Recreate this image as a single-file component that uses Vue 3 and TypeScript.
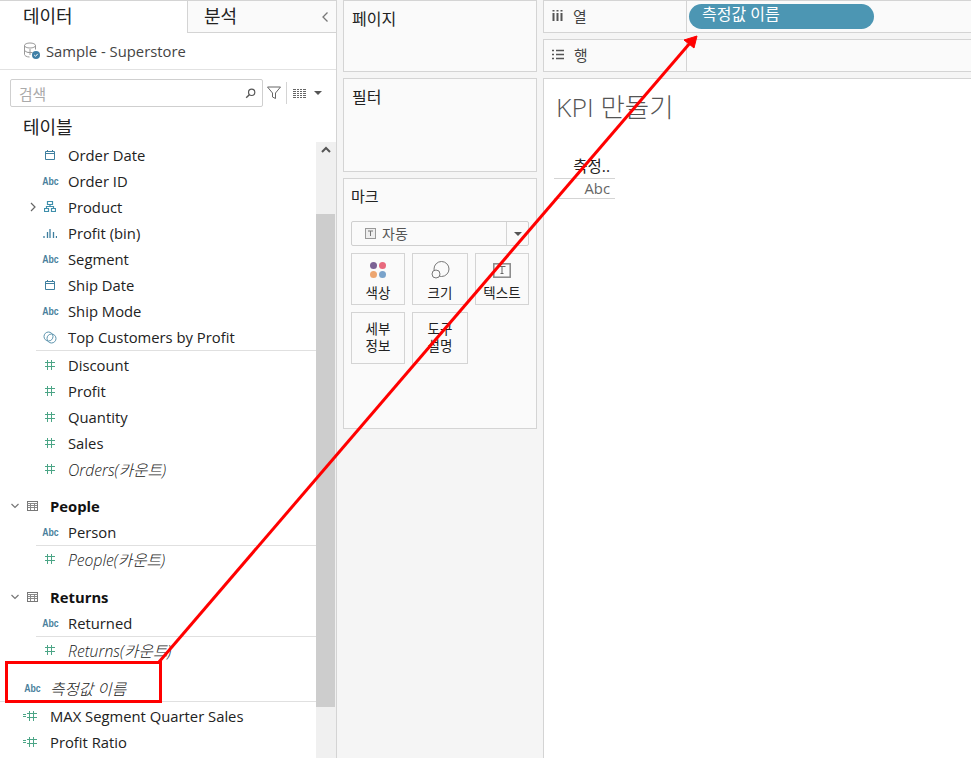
<template>
  <div class="app">
    <aside class="side">
      <div class="tabs">
        <div class="tab active">데이터</div>
        <div class="tab other">
          <span>분석</span>
          <svg class="collapse" width="8" height="12" viewBox="0 0 8 12"><path d="M6.500 1.500 2 6l4.500 4.500" fill="none" stroke="#777" stroke-width="1.300" /></svg>
        </div>
      </div>
      <div class="source">
        <svg width="18" height="18" viewBox="0 0 18 18">
          <ellipse cx="7" cy="3.500" rx="5.500" ry="2.500" fill="none" stroke="#999" />
          <path d="M1.500 3.500v9c0 1 2 2.500 5 2.500M12.500 3.500v4M1.500 8c0 1 2 2.500 5 2.500M7 7v6M4.500 10.500h5" fill="none" stroke="#999" />
          <circle cx="13" cy="13" r="4" fill="#3f7fa6" />
          <path d="m11.200 13 1.300 1.300 2.200-2.400" fill="none" stroke="#fff" />
        </svg>
        <span>Sample - Superstore</span>
      </div>
      <div class="searchrow">
        <div class="search">
          <span class="ph">검색</span>
          <svg width="11" height="11" viewBox="0 0 14 14"><circle cx="8.500" cy="5.500" r="4" fill="none" stroke="#555" stroke-width="1.500" /><path d="M5.500 8.500 1.500 12.500" stroke="#555" stroke-width="1.800" /></svg>
        </div>
        <svg class="funnel" width="14" height="14" viewBox="0 0 14 14"><path d="M.5 1h13L8.500 7v5.500l-3-1.500V7z" fill="none" stroke="#666" /></svg>
        <div class="vsep"></div>
        <svg class="gridicon" width="13" height="9" viewBox="0 0 13 9"><path d="M0 .5h13M0 2.500h13M0 4.500h13M0 6.500h13M0 8.500h13" stroke="#666" /><path d="M3.500 0v9M6.500 0v9M9.500 0v9" stroke="#fff" /></svg>
        <span class="tri"></span>
      </div>
      <div class="tablehead">테이블</div>
      <div class="listwrap">
        <div class="list">
          <template v-for="row in rows" :key="row.key">
            <div v-if="row.kind === 'sep'" class="sep" :class="{ wide: row.wide }"></div>
            <div v-else-if="row.kind === 'gap'" class="gap" :style="{ height: row.h + 'px' }"></div>
            <div v-else-if="row.kind === 'group'" class="row group">
              <svg class="chev" width="10" height="8" viewBox="0 0 10 8"><path d="m1.500 2 3.500 3.500L8.500 2" fill="none" stroke="#777" stroke-width="1.200" /></svg>
              <svg width="11" height="10" viewBox="0 0 11 10"><rect x=".5" y=".5" width="10" height="9" fill="#fff" stroke="#777" /><path d="M0 2.500h11M1 4.500h9M1 6.500h9M3.500 3v6M7.500 3v6" stroke="#888" /></svg>
              <span>{{ row.label }}</span>
            </div>
            <div v-else class="row" :class="{ top: row.top, it: row.italic }">
              <svg v-if="row.expand" class="expand" width="6" height="10" viewBox="0 0 6 10"><path d="m1 1 4 4-4 4" fill="none" stroke="#666" stroke-width="1.200" /></svg>
              <span class="ico">
                <span v-if="row.icon === 'abc'" class="abc">Abc</span>
                <svg v-else-if="row.icon === 'date'" width="12" height="12" viewBox="0 0 12 12"><path d="M1.500 2.500h9v8h-9zM1.500 4.500h9M3.500 1v2M8.500 1v2" fill="none" stroke="#3f7f9f" /></svg>
                <svg v-else-if="row.icon === 'tree'" width="12" height="12" viewBox="0 0 12 12"><path d="M3.500 .5h5v3h-5zM.5 7.500h4v3h-4zM7.500 7.500h4v3h-4zM6 3.500v2M2.500 7.500v-2h7v2" fill="none" stroke="#3f8fab" stroke-width="1.200" /></svg>
                <svg v-else-if="row.icon === 'bin'" width="14" height="10" viewBox="0 0 14 10"><path d="M1 8v2M4.500 4v6M7 1v9M10.500 4v6M13.500 8v2" stroke="#3f7f9f" stroke-width="1.300" /></svg>
                <svg v-else-if="row.icon === 'set'" width="14" height="13" viewBox="0 0 14 13"><circle cx="5.500" cy="5.500" r="4.500" fill="none" stroke="#5b93ad" /><circle cx="8.500" cy="7.500" r="4.500" fill="none" stroke="#5b93ad" /></svg>
                <svg v-else-if="row.icon === 'num'" width="10" height="10" viewBox="0 0 10 10"><path d="M2.500 0v10M6.500 0v10M0 2.500h10M0 6.500h10" stroke="#4ba586" /></svg>
                <svg v-else class="calc" width="14" height="10" viewBox="0 0 14 10"><path d="M6.500 0v10M10.500 0v10M4 2.500h10M4 6.500h10" stroke="#4ba586" /><path d="M0 3.500h3M0 5.500h3" stroke="#4ba586" /></svg>
              </span>
              <span>{{ row.label }}</span>
            </div>
          </template>
        </div>
        <div class="scroll">
          <svg class="up" width="12" height="8" viewBox="0 0 12 8"><path d="m2 6 4-4 4 4" fill="none" stroke="#555" stroke-width="2" /></svg>
          <div class="thumb"></div>
        </div>
      </div>
    </aside>

    <section class="mid">
      <div class="card pages">페이지</div>
      <div class="card filters">필터</div>
      <div class="card marks">
        <div class="markstitle">마크</div>
        <div class="dropdown">
          <svg width="11" height="11" viewBox="0 0 11 11"><rect x=".5" y=".5" width="10" height="10" fill="#eee" stroke="#999" /><path d="M3 3h5M5.500 3v5" stroke="#777" /></svg>
          <span class="dd-label">자동</span>
          <span class="dd-arrow"><span class="tri"></span></span>
        </div>
        <div class="markgrid">
          <div class="mark w54">
            <span class="mi"><svg width="18" height="18" viewBox="0 0 18 18"><circle cx="4.500" cy="4.500" r="3.500" fill="#7b6294" /><circle cx="13.500" cy="4.500" r="3.500" fill="#e8697d" /><circle cx="4.500" cy="13.500" r="3.500" fill="#eda671" /><circle cx="13.500" cy="13.500" r="3.500" fill="#7aa3cb" /></svg></span>
            <span>색상</span>
          </div>
          <div class="mark w56">
            <span class="mi"><svg width="19" height="18" viewBox="0 0 19 18"><circle cx="10.500" cy="8" r="7.500" fill="none" stroke="#777" /><circle cx="5" cy="13" r="4" fill="#fafafa" stroke="#777" /></svg></span>
            <span>크기</span>
          </div>
          <div class="mark w54">
            <span class="mi"><svg width="18" height="15" viewBox="0 0 18 15"><rect x=".8" y=".8" width="16.400" height="13.400" fill="none" stroke="#888" stroke-width="1.500" /><path d="M5.500 3.500h7M9 3.500v7M7.500 10.500h3" fill="none" stroke="#666" /></svg></span>
            <span>텍스트</span>
          </div>
          <div class="mark w54 two"><span>세부<br />정보</span></div>
          <div class="mark w56 two"><span>도구<br />설명</span></div>
        </div>
      </div>
    </section>

    <main class="main">
      <div class="shelf cols">
        <div class="shelflabel">
          <svg width="11" height="11" viewBox="0 0 11 11"><path d="M1.500 3v8M5.500 3v8M9.500 3v8M1.500 0v1.500M5.500 0v1.500M9.500 0v1.500" stroke="#555" stroke-width="2" /></svg>
          <span>열</span>
        </div>
        <div class="shelfbody"><div class="pill">측정값 이름</div></div>
      </div>
      <div class="shelf rowsh">
        <div class="shelflabel">
          <svg width="12" height="11" viewBox="0 0 12 11"><path d="M0 1.500h2M4 1.500h8M0 5.500h2M4 5.500h8M0 9.500h2M4 9.500h8" stroke="#555" stroke-width="1.600" /></svg>
          <span>행</span>
        </div>
        <div class="shelfbody"></div>
      </div>
      <div class="view">
        <h1>KPI 만들기</h1>
        <div class="vtable">
          <div class="vh">측정..</div>
          <div class="vc">Abc</div>
        </div>
      </div>
    </main>

    <div class="redbox"></div>
    <svg class="arrow" width="971" height="758" viewBox="0 0 971 758">
      <path d="M159 662 690 43" stroke="#f00" stroke-width="3" fill="none" />
      <path d="M697 36 684 40 694 48z" fill="#f00" stroke="#f00" />
    </svg>
  </div>
</template>

<script setup lang="ts">
interface Row {
  key: string
  kind: 'field' | 'sep' | 'gap' | 'group'
  label?: string
  icon?: string
  italic?: boolean
  top?: boolean
  expand?: boolean
  wide?: boolean
  h?: number
}

const field = (label: string, icon: string, extra: Partial<Row> = {}): Row => ({
  key: label,
  kind: 'field',
  label,
  icon,
  ...extra
})
const sep = (key: string, wide = false): Row => ({ key, kind: 'sep', wide })
const gap = (key: string, h: number): Row => ({ key, kind: 'gap', h })
const group = (label: string): Row => ({ key: label, kind: 'group', label })

const rows: Row[] = [
  field('Order Date', 'date'),
  field('Order ID', 'abc'),
  field('Product', 'tree', { expand: true }),
  field('Profit (bin)', 'bin'),
  field('Segment', 'abc'),
  field('Ship Date', 'date'),
  field('Ship Mode', 'abc'),
  field('Top Customers by Profit', 'set'),
  sep('s1'),
  gap('g0', 1),
  field('Discount', 'num'),
  field('Profit', 'num'),
  field('Quantity', 'num'),
  field('Sales', 'num'),
  field('Orders(카운트)', 'num', { italic: true }),
  gap('g1', 11),
  group('People'),
  field('Person', 'abc'),
  sep('s2'),
  field('People(카운트)', 'num', { italic: true }),
  gap('g2', 12),
  group('Returns'),
  field('Returned', 'abc'),
  sep('s3'),
  field('Returns(카운트)', 'num', { italic: true }),
  gap('g3', 12),
  field('측정값 이름', 'abc', { italic: true, top: true }),
  sep('s4', true),
  gap('g5', 1),
  field('MAX Segment Quarter Sales', 'calc', { top: true }),
  field('Profit Ratio', 'calc', { top: true })
]
</script>

<style>
html,
body {
  margin: 0;
  background: #f5f5f5;
}
</style>

<style scoped>
.app {
  position: relative;
  display: flex;
  width: 971px;
  height: 758px;
  overflow: hidden;
  font-family: "Open Sans", "Noto Sans CJK KR", sans-serif;
  font-size: 14.8px;
  color: #222;
  background: #f5f5f5;
}
.side {
  width: 336px;
  height: 758px;
  flex: none;
  background: #fff;
  border-right: 1px solid #d4d4d4;
  overflow: hidden;
}
.tabs {
  display: flex;
  height: 33px;
  border-top: 1px solid #d4d4d4;
  box-sizing: border-box;
}
.tab {
  font-size: 18px;
  line-height: 31px;
  box-sizing: border-box;
}
.active {
  width: 187px;
  padding-left: 23px;
}
.other {
  flex: 1;
  display: flex;
  justify-content: space-between;
  align-items: center;
  padding: 0 7px 0 16px;
  background: #fafafa;
  border-left: 1px solid #d4d4d4;
  border-bottom: 1px solid #d4d4d4;
}
.source {
  display: flex;
  align-items: center;
  gap: 5px;
  height: 36px;
  padding-left: 23px;
  border-bottom: 1px solid #e2e2e2;
  color: #444;
}
.searchrow {
  display: flex;
  align-items: center;
  height: 46px;
  padding: 0 0 0 10px;
  box-sizing: border-box;
}
.search {
  display: flex;
  align-items: center;
  justify-content: space-between;
  width: 253px;
  height: 28px;
  padding: 0 6px 0 8px;
  box-sizing: border-box;
  border: 1px solid #cfcfcf;
  border-radius: 2px;
}
.ph {
  color: #aaa;
}
.funnel {
  margin-left: 4px;
}
.vsep {
  width: 1px;
  height: 22px;
  margin: 0 6px 0 5px;
  background: #d4d4d4;
}
.tri {
  display: inline-block;
  width: 0;
  height: 0;
  border-left: 4px solid transparent;
  border-right: 4px solid transparent;
  border-top: 4px solid #555;
}
.searchrow .tri {
  margin-left: 8px;
}
.tablehead {
  height: 26px;
  padding-left: 23px;
  font-size: 18px;
  line-height: 22px;
}
.listwrap {
  position: relative;
  display: flex;
}
.list {
  width: 316px;
  flex: none;
}
.row {
  display: flex;
  align-items: center;
  height: 26px;
  padding-left: 36px;
  white-space: nowrap;
  position: relative;
}
.row.top {
  padding-left: 18px;
}
.it {
  font-style: italic;
  font-size: 15.7px;
  font-weight: 300;
  color: #1a1a1a;
}
.ico {
  display: flex;
  align-items: center;
  justify-content: center;
  width: 28px;
  margin-right: 4px;
  flex: none;
  font-style: normal;
}
.calc {
  margin-left: -4px;
}
.abc {
  font-family: "Liberation Sans", sans-serif;
  font-size: 10px;
  font-weight: 700;
  color: #4a7f9c;
  transform: scaleX(0.87);
}
.expand {
  position: absolute;
  left: 30px;
  top: 8px;
}
.group {
  padding-left: 10px;
  font-weight: 700;
  color: #111;
}
.chev {
  margin-right: 7px;
}
.group span {
  margin-left: 12px;
}
.sep {
  height: 1px;
  margin-left: 36px;
  background: #e0e0e0;
}
.sep.wide {
  margin-left: 0;
}
.scroll {
  position: absolute;
  left: 316px;
  top: 0;
  width: 20px;
  height: 620px;
  background: #f0f0f0;
}
.up {
  position: absolute;
  left: 4px;
  top: 4px;
}
.thumb {
  position: absolute;
  top: 72px;
  left: 0;
  width: 19px;
  height: 493px;
  background: #cdcdcd;
}
.mid {
  width: 206px;
  flex: none;
  padding: 0 6px;
  box-sizing: border-box;
  display: flex;
  flex-direction: column;
  gap: 6px;
}
.card {
  box-sizing: border-box;
  background: #fafafa;
  border: 1px solid #d4d4d4;
  padding: 5px 8px;
  font-size: 16px;
}
.pages {
  height: 72px;
}
.filters {
  height: 94px;
}
.marks {
  height: 251px;
  padding: 6px 7px;
  font-size: 15px;
}
.markstitle {
  height: 36px;
}
.dropdown {
  display: flex;
  align-items: center;
  height: 25px;
  box-sizing: border-box;
  border: 1px solid #cfcfcf;
  border-radius: 2px;
  padding: 0 0 0 13px;
  font-size: 14px;
  color: #555;
}
.dd-label {
  margin: -2px 0 0 6px;
  flex: 1;
}
.dd-arrow {
  display: flex;
  align-items: center;
  justify-content: center;
  width: 21px;
  height: 100%;
  border-left: 1px solid #d4d4d4;
}
.markgrid {
  display: grid;
  grid-template-columns: 54px 56px 54px;
  grid-auto-rows: 52px;
  gap: 7px;
  margin-top: 7px;
}
.mark {
  box-sizing: border-box;
  display: flex;
  flex-direction: column;
  align-items: center;
  gap: 6px;
  padding-top: 7px;
  border: 1px solid #d4d4d4;
  font-size: 13.5px;
  line-height: 17px;
  color: #222;
  text-align: center;
  white-space: nowrap;
}
.mi {
  display: flex;
  align-items: center;
  justify-content: center;
  height: 18px;
}
.mark.two {
  justify-content: center;
  padding-top: 0;
}
.main {
  flex: 1;
  display: flex;
  flex-direction: column;
  gap: 6px;
}
.shelf {
  display: flex;
  box-sizing: border-box;
  background: #fafafa;
  border: 1px solid #d4d4d4;
  border-right: none;
  height: 33px;
}
.shelflabel {
  display: flex;
  align-items: center;
  gap: 10px;
  width: 143px;
  padding: 0 0 2px 8px;
  box-sizing: border-box;
  border-right: 1px solid #d4d4d4;
  color: #444;
}
.shelfbody {
  flex: 1;
  padding: 3px 0 0 2px;
}
.pill {
  width: 185px;
  height: 25px;
  box-sizing: border-box;
  padding-left: 13px;
  border-radius: 13px;
  background: #4c96b3;
  color: #fff;
  font-size: 16px;
  line-height: 21px;
}
.view {
  flex: 1;
  box-sizing: border-box;
  background: #fff;
  border-top: 1px solid #d4d4d4;
  border-left: 1px solid #d4d4d4;
  padding: 12px 0 0 12px;
}
h1 {
  margin: 0;
  font-size: 26.5px;
  font-weight: 300;
  line-height: 32px;
  color: #555;
}
.vtable {
  width: 61px;
  margin: 33px 0 0 -2px;
  text-align: right;
  color: #444;
}
.vh {
  height: 22px;
  line-height: 20px;
  padding-right: 5px;
  border-bottom: 1px solid #d4d4d4;
  font-size: 15.5px;
  color: #222;
}
.vc {
  height: 19px;
  line-height: 19px;
  padding-right: 5px;
  border-bottom: 1px solid #d4d4d4;
  color: #666;
}
.redbox {
  position: absolute;
  left: 5px;
  top: 661px;
  width: 157px;
  height: 42px;
  box-sizing: border-box;
  border: 3px solid #f00;
}
.arrow {
  position: absolute;
  left: 0;
  top: 0;
  pointer-events: none;
}
</style>
